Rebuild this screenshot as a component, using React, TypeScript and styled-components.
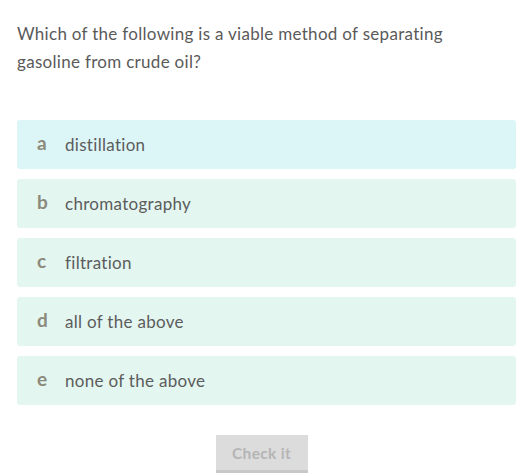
import React from "react";
import styled, { createGlobalStyle } from "styled-components";

const Global = createGlobalStyle`
  html, body { margin: 0; padding: 0; background: #fff; }
  body { font-family: Lato, "Open Sans", Arial, sans-serif; }
`;

const Page = styled.div`
  width: 532px;
  padding: 20px 16px 0 17px;
  box-sizing: border-box;
`;

const Question = styled.p`
  margin: 0 0 44px 0;
  font-size: 17px;
  letter-spacing: 0.3px;
  line-height: 28px;
  color: #5a5a5a;
  max-width: 450px;
`;

const Options = styled.div`
  display: flex;
  flex-direction: column;
  gap: 10px;
`;

const Option = styled.div<{ $active?: boolean }>`
  display: flex;
  align-items: center;
  height: 49px;
  width: 499px;
  border-radius: 3px;
  background: ${(p) => (p.$active ? "#dcf6f7" : "#e3f6f0")};
  box-sizing: border-box;
  padding-left: 20px;
`;

const Letter = styled.span`
  width: 28px;
  font-size: 19px;
  font-weight: 700;
  color: #8c8a7b;
  margin-top: -4px;
`;

const Label = styled.span`
  font-size: 17px;
  letter-spacing: 0.3px;
  color: #5c5c5c;
`;

const Footer = styled.div`
  display: flex;
  justify-content: center;
  padding-top: 30px;
  padding-right: 10px;
`;

const Button = styled.button`
  width: 92px;
  height: 38px;
  border: none;
  border-bottom: 3px solid #c8c8c8;
  background: #dcdcdc;
  color: #b5b5b5;
  font-family: Lato, "Open Sans", Arial, sans-serif;
  font-weight: 700;
  font-size: 15.5px;
  letter-spacing: 0.3px;
  padding: 0;
`;

const items = [
  ["a", "distillation"],
  ["b", "chromatography"],
  ["c", "filtration"],
  ["d", "all of the above"],
  ["e", "none of the above"],
];

export default function App() {
  return (
    <Page>
      <Global />
      <Question>
        Which of the following is a viable method of separating gasoline from crude oil?
      </Question>
      <Options>
        {items.map(([l, t], i) => (
          <Option key={l} $active={i === 0}>
            <Letter>{l}</Letter>
            <Label>{t}</Label>
          </Option>
        ))}
      </Options>
      <Footer>
        <Button>Check it</Button>
      </Footer>
    </Page>
  );
}
